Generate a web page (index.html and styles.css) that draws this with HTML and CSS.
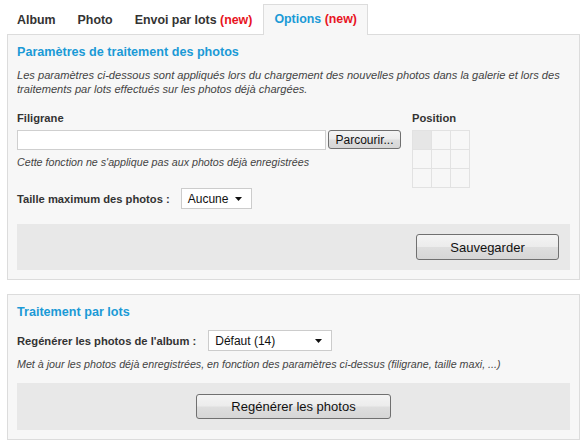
FILE: index.html
```html
<!DOCTYPE html>
<html lang="fr">
<head>
<meta charset="utf-8">
<title>Options</title>
<link rel="stylesheet" href="styles.css">
</head>
<body>
<div class="page">
  <div class="tabs">
    <div class="tab">Album</div>
    <div class="tab">Photo</div>
    <div class="tab">Envoi par lots <span class="new">(new)</span></div>
    <div class="tab active">Options <span class="new">(new)</span></div>
  </div>

  <div class="panel">
    <h2 class="title">Paramètres de traitement des photos</h2>
    <p class="desc">Les paramètres ci-dessous sont appliqués lors du chargement des nouvelles photos dans la galerie et lors des traitements par lots effectués sur les photos déjà chargées.</p>

    <div class="form-row">
      <div class="wm">
        <div class="label">Filigrane</div>
        <div class="file-row">
          <div class="file-input"></div>
          <div class="btn btn-small">Parcourir...</div>
        </div>
        <div class="note">Cette fonction ne s'applique pas aux photos déjà enregistrées</div>
      </div>
      <div class="pos">
        <div class="label">Position</div>
        <div class="grid">
          <div class="cell sel"></div><div class="cell"></div><div class="cell"></div>
          <div class="cell"></div><div class="cell"></div><div class="cell"></div>
          <div class="cell"></div><div class="cell"></div><div class="cell"></div>
        </div>
      </div>
    </div>

    <div class="size-row">
      <span class="label">Taille maximum des photos :</span>
      <div class="select sel-size"><span>Aucune</span><svg class="arrow" width="7" height="4" viewBox="0 0 7 4"><path d="M0 0H7L3.5 4Z" fill="#111"/></svg></div>
    </div>

    <div class="bar bar-right">
      <div class="btn btn-save">Sauvegarder</div>
    </div>
  </div>

  <div class="panel panel2">
    <h2 class="title">Traitement par lots</h2>
    <div class="size-row regen-row">
      <span class="label">Regénérer les photos de l'album :</span>
      <div class="select sel-album"><span>Défaut (14)</span><svg class="arrow" width="7" height="4" viewBox="0 0 7 4"><path d="M0 0H7L3.5 4Z" fill="#111"/></svg></div>
    </div>
    <div class="note note2">Met à jour les photos déjà enregistrées, en fonction des paramètres ci-dessus (filigrane, taille maxi, ...)</div>
    <div class="bar bar-center">
      <div class="btn btn-regen">Regénérer les photos</div>
    </div>
  </div>
</div>
</body>
</html>
```

FILE: styles.css
```css
html, body {
  margin: 0;
  padding: 0;
  background: #ffffff;
}
body {
  font-family: "Liberation Sans", Arial, sans-serif;
  color: #333333;
}
.page {
  padding: 5px 6px 0 7px;
}
.tabs {
  display: flex;
  align-items: flex-end;
  gap: 0;
  height: 30px;
  margin: 0 0 -1px -1px;
  position: relative;
  z-index: 1;
}
.tab {
  height: 29px;
  line-height: 29px;
  padding: 0 10px;
  font-size: 12.4px;
  font-weight: bold;
  color: #333333;
  border: 1px solid transparent;
  border-bottom: none;
}
.tab.active {
  color: #1b9ad6;
  background: #f7f7f7;
  border-color: #dcdcdc;
  height: 30px;
}
.new {
  color: #e8141e;
}
.panel {
  background: #f7f7f7;
  border: 1px solid #dcdcdc;
  padding: 10px 9px 9px 9px;
}
.panel2 {
  margin-top: 14px;
}
.title {
  margin: 0;
  font-size: 12.6px;
  line-height: 15px;
  font-weight: bold;
  color: #1b9ad6;
}
.desc {
  margin: 8px 0 0 0;
  font-size: 11.1px;
  line-height: 14px;
  font-style: italic;
  color: #444444;
}
.form-row {
  display: flex;
  gap: 11px;
  margin-top: 15px;
}
.label {
  font-size: 11.2px;
  line-height: 14px;
  font-weight: bold;
  color: #333333;
}
.file-row {
  display: flex;
  align-items: flex-start;
  gap: 2px;
  margin-top: 5px;
}
.file-input {
  width: 307px;
  height: 18px;
  background: #ffffff;
  border: 1px solid #cfcfcf;
}
.btn {
  display: flex;
  align-items: center;
  justify-content: center;
  box-sizing: border-box;
  border: 1px solid #707070;
  border-radius: 3px;
  background: linear-gradient(#f4f4f4 0%, #ececec 48%, #dedede 52%, #d6d6d6 100%);
  color: #111111;
  font-size: 13px;
}
.btn-small {
  width: 73px;
  height: 19px;
  font-size: 12px;
}
.note {
  margin-top: 5px;
  font-size: 10.7px;
  line-height: 14px;
  font-style: italic;
  color: #444444;
}
.pos .grid {
  margin-top: 5px;
  display: grid;
  grid-template-columns: repeat(3, 18px);
  grid-template-rows: repeat(3, 18px);
  gap: 1px;
  background: #e2e2e2;
  border: 1px solid #e2e2e2;
  width: max-content;
}
.cell {
  background: #f7f7f7;
}
.cell.sel {
  background: #e6e6e6;
}
.size-row {
  display: flex;
  align-items: center;
  gap: 11px;
  margin-top: 0;
}
.select {
  box-sizing: border-box;
  height: 21px;
  background: #ffffff;
  border: 1px solid #cccccc;
  display: flex;
  align-items: center;
  justify-content: space-between;
  padding: 0 9px 0 6px;
  font-size: 12px;
  color: #111111;
}
.sel-size {
  width: 71px;
}
.regen-row {
  margin-top: 10px;
  gap: 12px;
}
.sel-album {
  width: 124px;
}
.arrow {
  display: block;
}
.note2 {
  margin-top: 6px;
}
.bar {
  background: #e8e8e8;
  display: flex;
  margin-top: 15px;
}
.bar-right {
  justify-content: flex-end;
  padding: 10px 11px 10px 0;
}
.btn-save {
  width: 143px;
  height: 26px;
}
.bar-center {
  justify-content: center;
  padding: 11px 0;
  margin-top: 12px;
}
.btn-regen {
  width: 195px;
  height: 25px;
}
```
